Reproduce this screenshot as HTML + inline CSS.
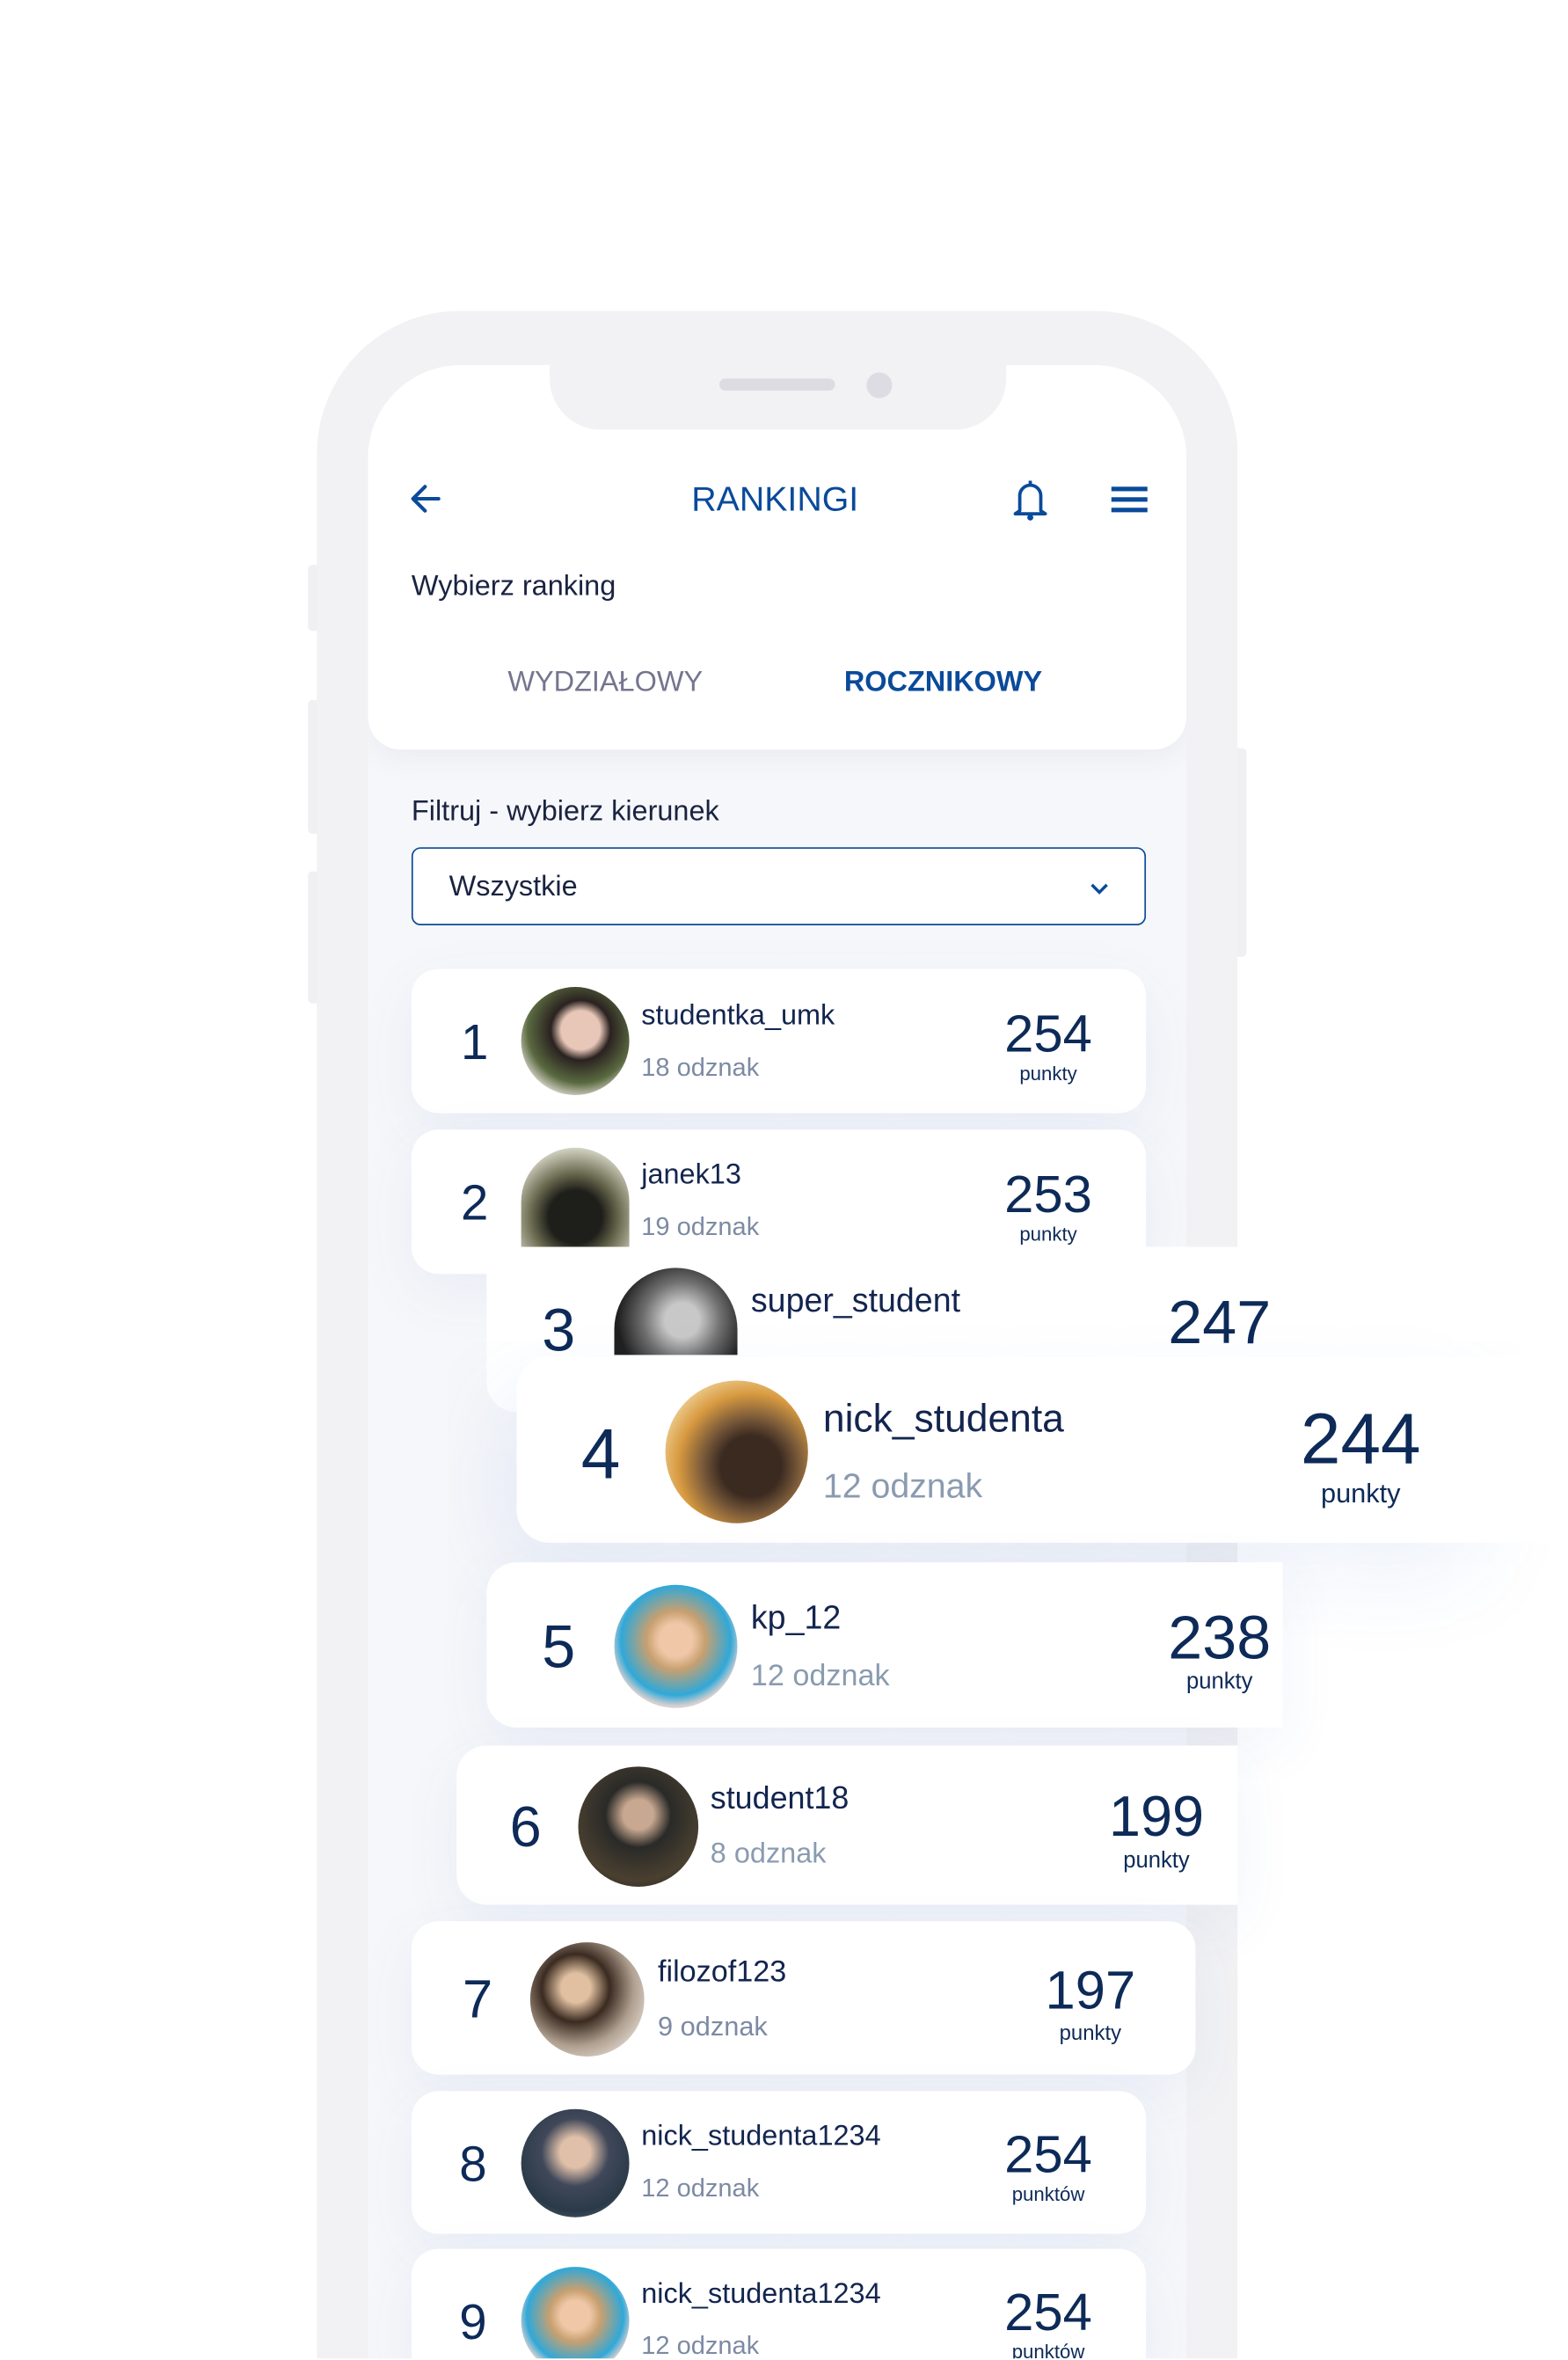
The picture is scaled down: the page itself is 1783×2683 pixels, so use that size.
<!DOCTYPE html>
<html><head><meta charset="utf-8">
<style>
*{margin:0;padding:0;box-sizing:border-box}
html,body{width:1783px;height:2683px;overflow:hidden;background:#fff}
#w{position:absolute;left:0;top:0;width:1044px;height:1570px;overflow:hidden;transform:scale(1.7078);transform-origin:0 0;font-family:"Liberation Sans",sans-serif;color:#0f2a55}
.a{position:absolute}
.t{position:absolute;white-space:nowrap;line-height:1}
.card{position:absolute;background:#fff;border-radius:18px;box-shadow:0 12px 40px rgba(60,100,180,0.07)}
.av{position:absolute;border-radius:50%;overflow:hidden}
.c{text-align:center;transform:translateX(-50%)}
.g{color:#7d8aa3}
.n{color:#0d2a58}
</style></head><body><div id="w">
<div class="a" style="left:205px;top:376px;width:8px;height:44px;background:#f0f0f3;border-radius:3px"></div>
<div class="a" style="left:205px;top:466px;width:8px;height:89px;background:#f0f0f3;border-radius:3px"></div>
<div class="a" style="left:205px;top:580px;width:8px;height:88px;background:#f0f0f3;border-radius:3px"></div>
<div class="a" style="left:822px;top:498px;width:8px;height:139px;background:#f0f0f3;border-radius:3px"></div>
<div class="a" style="left:211px;top:207px;width:613px;height:1500px;background:#f2f2f4;border-radius:95px"></div>
<div class="a" style="left:245px;top:243px;width:545px;height:1450px;background:#f6f7fa;border-radius:62px;overflow:hidden">
  <div class="a" style="left:0;top:0;width:545px;height:256px;background:#fff;border-radius:0 0 22px 22px;box-shadow:0 6px 18px rgba(40,60,120,0.06)"></div>
</div>
<div class="a" style="left:366px;top:236px;width:304px;height:50px;background:#f2f2f4;border-radius:0 0 34px 34px"></div>
<div class="a" style="left:479px;top:252px;width:77px;height:8px;background:#dcdce2;border-radius:4px"></div>
<div class="a" style="left:577px;top:248px;width:17px;height:17px;background:#dcdce2;border-radius:50%"></div>
<svg class="a" style="left:272px;top:320px" width="24" height="24" viewBox="0 0 24 24"><path d="M20 12H4M11 4l-8 8 8 8" fill="none" stroke="#0a4a9a" stroke-width="2.4" stroke-linecap="round" stroke-linejoin="round"/></svg>
<div class="t c" style="left:516px;top:321px;font-size:23px;color:#0a4a9a">RANKINGI</div>
<svg class="a" style="left:673px;top:317px" width="26" height="30" viewBox="0 0 26 30"><path d="M13 3v2M6 23V13a7 7 0 0 1 14 0v10l3 2H3z" fill="none" stroke="#0a4a9a" stroke-width="2.2" stroke-linejoin="round"/><circle cx="13" cy="27.5" r="2" fill="#0a4a9a"/></svg>
<div class="a" style="left:740px;top:324px;width:24px;height:3px;background:#0a4a9a"></div>
<div class="a" style="left:740px;top:331px;width:24px;height:3px;background:#0a4a9a"></div>
<div class="a" style="left:740px;top:338px;width:24px;height:3px;background:#0a4a9a"></div>
<div class="t" style="left:274px;top:381px;font-size:19px;color:#1a2340">Wybierz ranking</div>
<div class="t c" style="left:403px;top:445px;font-size:19px;color:#75758f">WYDZIAŁOWY</div>
<div class="t c" style="left:628px;top:445px;font-size:19px;color:#0a4a9a;font-weight:bold">ROCZNIKOWY</div>
<div class="t" style="left:274px;top:531px;font-size:19px;color:#1a2340">Filtruj - wybierz kierunek</div>
<div class="a" style="left:274px;top:564px;width:489px;height:52px;border:1.5px solid #0a4a9a;border-radius:6px;background:#fff"></div>
<div class="t" style="left:299px;top:581px;font-size:19px;color:#1a2340">Wszystkie</div>
<svg class="a" style="left:724px;top:586px" width="16" height="12" viewBox="0 0 16 12"><path d="M3 3l5 5 5-5" fill="none" stroke="#0a4a9a" stroke-width="2"/></svg>

<div class="card" style="left:274px;top:645px;width:489px;height:96px"></div>
<div class="t c n" style="left:316px;top:677px;font-size:33px">1</div>
<div class="av" style="left:347px;top:657px;width:72px;height:72px;background:radial-gradient(circle at 55% 40%,#e8c7b8 0 22%,#2a2220 34%,#5a6a40 60%,#f0e8e4 80%)"></div>
<div class="t" style="left:427px;top:667px;font-size:19px;color:#13254f">studentka_umk</div>
<div class="t g" style="left:427px;top:702px;font-size:17px">18 odznak</div>
<div class="t c n" style="left:698px;top:671px;font-size:35px">254</div>
<div class="t c n" style="left:698px;top:708px;font-size:13px">punkty</div>

<div class="card" style="left:274px;top:752px;width:489px;height:96px"></div>
<div class="t c n" style="left:316px;top:784px;font-size:33px">2</div>
<div class="av" style="left:347px;top:764px;width:72px;height:66px;border-radius:36px 36px 0 0;background:radial-gradient(circle at 50% 70%,#1e1e1a 0 30%,#6a6a50 50%,#d8d8c8 80%)"></div>
<div class="t" style="left:427px;top:773px;font-size:19px;color:#13254f">janek13</div>
<div class="t g" style="left:427px;top:808px;font-size:17px">19 odznak</div>
<div class="t c n" style="left:698px;top:778px;font-size:35px">253</div>
<div class="t c n" style="left:698px;top:815px;font-size:13px">punkty</div>

<div class="card" style="left:324px;top:830px;width:500px;height:110px;border-radius:0 0 0 20px;box-shadow:none"></div>
<div class="t c n" style="left:372px;top:866px;font-size:40px">3</div>
<div class="av" style="left:409px;top:844px;width:82px;height:58px;border-radius:41px 41px 0 0;background:radial-gradient(circle at 55% 60%,#c8c8c8 0 20%,#707070 45%,#202020 75%)"></div>
<div class="t" style="left:500px;top:855px;font-size:22px;color:#13254f">super_student</div>
<div class="t c n" style="left:812px;top:860px;font-size:41px">247</div>

<div class="card" style="left:344px;top:903px;width:650px;height:124px;border-radius:22px 0 0 22px;box-shadow:-10px 20px 60px rgba(60,110,200,0.10)"></div>
<div class="a" style="left:900px;top:903px;width:144px;height:124px;background:linear-gradient(90deg,rgba(255,255,255,0),#fff 60%)"></div>
<div class="t c n" style="left:400px;top:944px;font-size:47px">4</div>
<div class="av" style="left:443px;top:919px;width:95px;height:95px;background:radial-gradient(circle at 60% 60%,#3a2a20 0 25%,#7a5a3a 40%,#d89a40 60%,#f5e0b0 85%)"></div>
<div class="t" style="left:548px;top:931px;font-size:26px;color:#13254f">nick_studenta</div>
<div class="t" style="left:548px;top:978px;font-size:23px;color:#8a9bb0">12 odznak</div>
<div class="t c n" style="left:906px;top:935px;font-size:48px">244</div>
<div class="t c n" style="left:906px;top:985px;font-size:18px">punkty</div>

<div class="card" style="left:324px;top:1040px;width:530px;height:110px;border-radius:20px 0 0 20px"></div>
<div class="t c n" style="left:372px;top:1077px;font-size:40px">5</div>
<div class="av" style="left:409px;top:1055px;width:82px;height:82px;background:radial-gradient(circle at 50% 45%,#f0c8a8 0 18%,#c8a070 32%,#30a8d8 60%,#d8d0d0 72%)"></div>
<div class="t" style="left:500px;top:1066px;font-size:22px;color:#13254f">kp_12</div>
<div class="t" style="left:500px;top:1106px;font-size:20px;color:#8a9bb0">12 odznak</div>
<div class="t c n" style="left:812px;top:1070px;font-size:41px">238</div>
<div class="t c n" style="left:812px;top:1112px;font-size:15px">punkty</div>

<div class="card" style="left:304px;top:1162px;width:520px;height:106px;border-radius:20px 0 0 20px"></div>
<div class="t c n" style="left:350px;top:1198px;font-size:38px">6</div>
<div class="av" style="left:385px;top:1176px;width:80px;height:80px;background:radial-gradient(circle at 50% 40%,#c8a890 0 16%,#2a2a28 35%,#4a4030 70%,#1a1a1a)"></div>
<div class="t" style="left:473px;top:1187px;font-size:21px;color:#13254f">student18</div>
<div class="t" style="left:473px;top:1225px;font-size:19px;color:#8a9bb0">8 odznak</div>
<div class="t c n" style="left:770px;top:1191px;font-size:38px">199</div>
<div class="t c n" style="left:770px;top:1231px;font-size:15px">punkty</div>

<div class="card" style="left:274px;top:1279px;width:522px;height:102px"></div>
<div class="t c n" style="left:318px;top:1313px;font-size:36px">7</div>
<div class="av" style="left:353px;top:1293px;width:76px;height:76px;background:radial-gradient(circle at 40% 40%,#e0c0a0 0 15%,#3a2a20 35%,#b0a090 60%,#e8e0d8 85%)"></div>
<div class="t" style="left:438px;top:1303px;font-size:20px;color:#13254f">filozof123</div>
<div class="t g" style="left:438px;top:1340px;font-size:18px">9 odznak</div>
<div class="t c n" style="left:726px;top:1307px;font-size:36px">197</div>
<div class="t c n" style="left:726px;top:1346px;font-size:14px">punkty</div>

<div class="card" style="left:274px;top:1392px;width:489px;height:95px"></div>
<div class="t c n" style="left:315px;top:1424px;font-size:33px">8</div>
<div class="av" style="left:347px;top:1404px;width:72px;height:72px;background:radial-gradient(circle at 50% 40%,#e0c0a8 0 18%,#40485a 40%,#2a3a48 70%,#6a7a80)"></div>
<div class="t" style="left:427px;top:1413px;font-size:19px;color:#13254f">nick_studenta1234</div>
<div class="t g" style="left:427px;top:1448px;font-size:17px">12 odznak</div>
<div class="t c n" style="left:698px;top:1417px;font-size:35px">254</div>
<div class="t c n" style="left:698px;top:1454px;font-size:13px">punktów</div>

<div class="card" style="left:274px;top:1497px;width:489px;height:95px"></div>
<div class="t c n" style="left:315px;top:1529px;font-size:33px">9</div>
<div class="av" style="left:347px;top:1509px;width:72px;height:72px;background:radial-gradient(circle at 50% 45%,#f0c8a8 0 18%,#c8a070 32%,#30a8d8 60%,#d8d0d0 72%)"></div>
<div class="t" style="left:427px;top:1518px;font-size:19px;color:#13254f">nick_studenta1234</div>
<div class="t g" style="left:427px;top:1553px;font-size:17px">12 odznak</div>
<div class="t c n" style="left:698px;top:1522px;font-size:35px">254</div>
<div class="t c n" style="left:698px;top:1559px;font-size:13px">punktów</div>
</div></body></html>
